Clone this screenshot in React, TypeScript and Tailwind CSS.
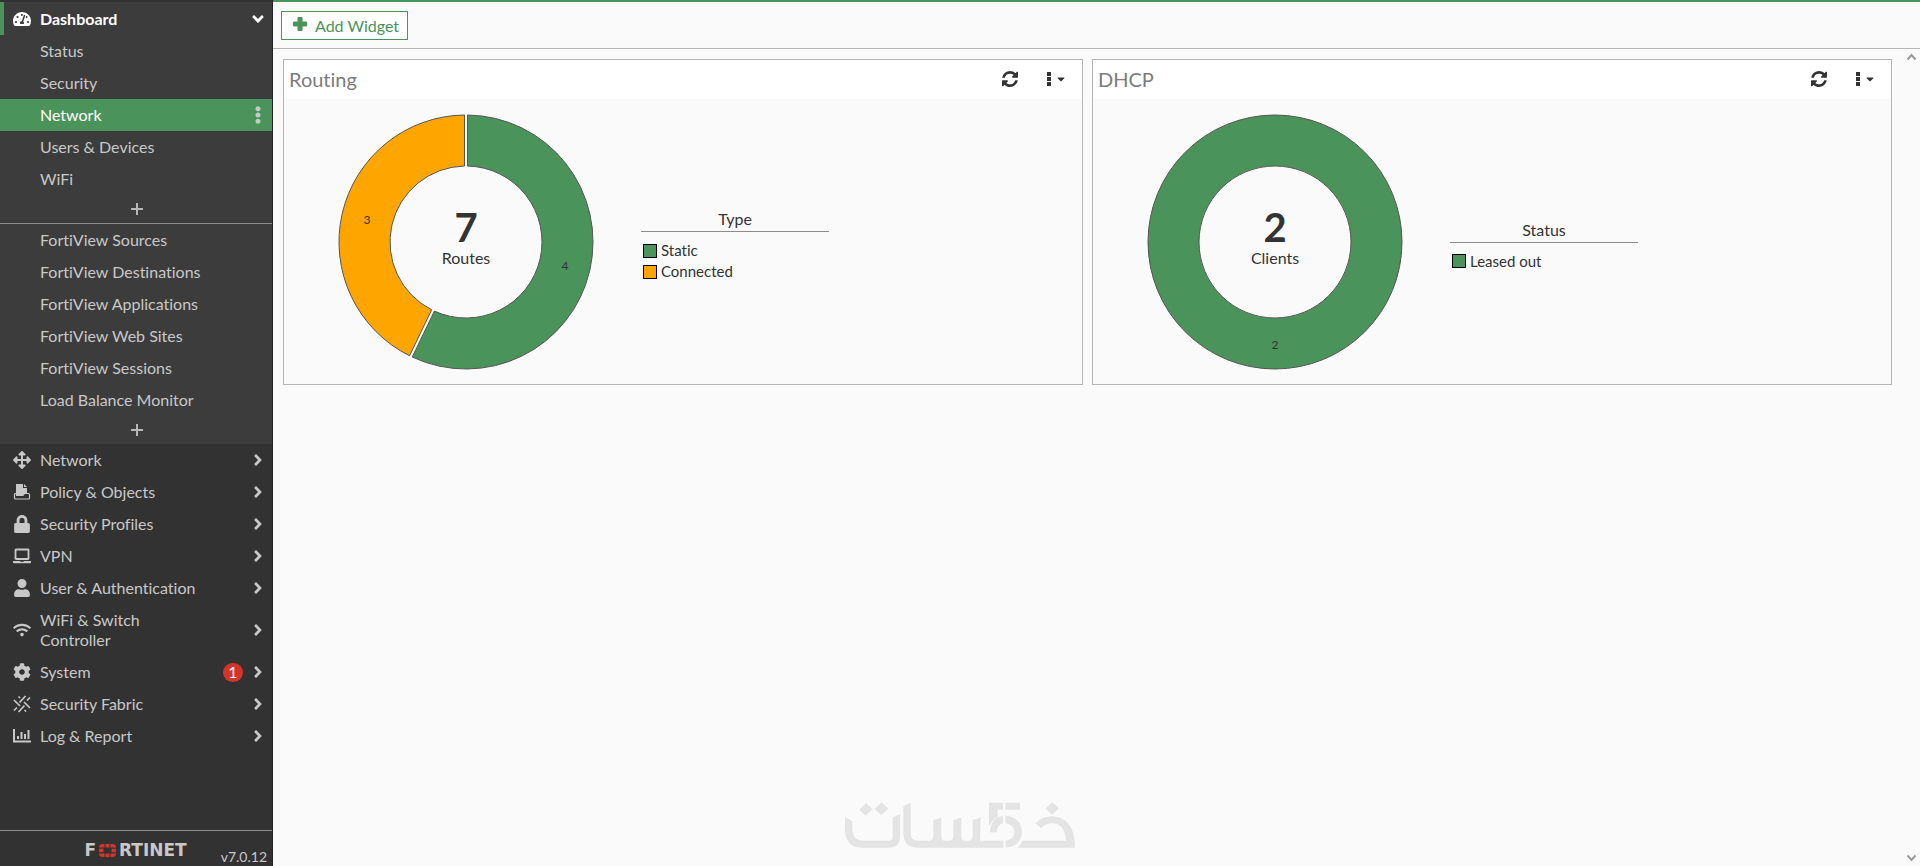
import type { ReactNode } from "react";
import {
  FaAngleDown,
  FaAngleRight,
  FaArrowsAlt,
  FaCaretDown,
  FaCog,
  FaEllipsisV,
  FaLock,
  FaTachometerAlt,
  FaUser,
  FaWifi,
} from "react-icons/fa";

const GREEN = "#4a935a";
const ORANGE = "#ffa500";

function PolicyIcon() {
  return (
    <svg viewBox="0 0 18 18" className="size-[18px]" fill="currentColor" aria-hidden="true">
      <path d="M3 1h7v4h4v5.500l-3 .5-1 1.500H3z" />
      <path d="M11 1l3 3h-3z" />
      <path
        d="M3 10.500H2.500a1 1 0 0 0-1 1V15a1 1 0 0 0 1 1h13a1 1 0 0 0 1-1v-3.500a1 1 0 0 0-1-1h-4l-1.500 2H3"
        fill="none"
        stroke="currentColor"
        strokeWidth="1.200"
      />
    </svg>
  );
}

function LaptopIcon() {
  return (
    <svg viewBox="0 0 18 18" className="size-[18px]" aria-hidden="true">
      <rect x="2.500" y="2.500" width="13" height="9.500" rx="0.500" fill="none" stroke="currentColor" strokeWidth="1.800" />
      <path d="M0 14h7l.5.700h3L11 14h7v1.200a1 1 0 0 1-1 1H1a1 1 0 0 1-1-1z" fill="currentColor" />
    </svg>
  );
}

function FabricIcon() {
  return (
    <svg viewBox="0 0 18 18" className="size-[18px]" fill="none" stroke="currentColor" strokeWidth="1.700" aria-hidden="true">
      <path d="M6.500 7.500l6-6.500M11 7l6 6M11.500 10.500l-6 6.500M1 5l6 6" />
      <path d="M5.500 1.500l1.500 1.500M14 5.500l3-3M1 15.500l3-3M11.500 15l1.500 1.500" />
    </svg>
  );
}

function ReportIcon() {
  return (
    <svg viewBox="0 0 18 18" className="size-[18px]" fill="currentColor" aria-hidden="true">
      <path d="M0 2h2v11.500h16v2H0z" />
      <path d="M4 9h2v3H4zM7.500 5h2v7h-2zM11 7h2v5h-2zM14.500 3h2v9h-2z" />
    </svg>
  );
}

function RefreshIcon() {
  return (
    <svg viewBox="0 0 1536 1536" className="size-4" fill="currentColor" aria-hidden="true">
      <path d="M1511 928q0 5-1 7-64 268-268 434.500T764 1536q-146 0-282.500-55T238 1324l-129 129q-19 19-45 19t-45-19-19-45V960q0-26 19-45t45-19h448q26 0 45 19t19 45-19 45l-137 137q71 66 161 102t187 36q134 0 250-65t186-179q11-17 53-117 8-23 30-23h192q13 0 22.500 9.500t9.500 22.500zm25-800v448q0 26-19 45t-45 19h-448q-26 0-45-19t-19-45 19-45l138-138Q969 256 768 256q-134 0-250 65T332 500q-11 17-53 117-8 23-30 23H50q-13 0-22.500-9.500T18 608v-7q65-268 270-434.500T768 0q146 0 284 55.500T1297 212l130-129q19-19 45-19t45 19 19 45z" />
    </svg>
  );
}

function LogoGrid() {
  return (
    <svg viewBox="0 0 17 13" className="h-[13px] w-[17px]" fill="#d4352a" aria-hidden="true">
      <path d="M3 0h2.500v3.500H0A3.200 3.200 0 0 1 3 0zM6.500 0h4v3.500h-4zM11.500 0H14a3.200 3.200 0 0 1 3 3.500h-5.500zM0 4.700h4.500v3.600H0zM12.500 4.700H17v3.600h-4.500zM0 9.500h5.500V13H3a3.200 3.200 0 0 1-3-3.500zM6.500 9.500h4V13h-4zM11.500 9.500H17a3.200 3.200 0 0 1-3 3.500h-2.500z" />
    </svg>
  );
}

function Watermark() {
  return (
    <svg
      viewBox="75 68 690 136"
      className="pointer-events-none absolute bottom-[18px] left-1/2 h-[46px] w-[230px] -translate-x-1/2"
      fill="#e4e4e4"
      role="img"
      aria-label="Khamsat"
    >
      <path d="M75 113l22 11v26q2 33 33 33h78q10 0 10-12v-58l22-9v66q0 34-32 34h-80q-53-2-53-54z" />
      <path d="M138 70l20 18-21 20-19-18zM185 68l20 19-21 19-20-18z" />
      <path d="M250 80l22-11v92q0 22 20 22h36q12 0 12-13v-48l24-9v58q0 12 10 12h14q12 0 12-13v-48l24-9v58q0 12 10 12h12q12 0 12-13v-48l24-9-2 70h70v21H290q-40-2-40-44z" />
      <path d="M507 69h42v21h-16v22q-18 8-22 24h-4zM556 69h44v21h-44z" />
      <path d="M549 108v23q-16 3-19 27h-20q2-45 39-50zM556 108q48 4 50 49-2 43-50 47v-21q26-3 27-26-1-23-27-26z" />
      <path d="M592 204q11-8 15-21h131q-4-52-41-52-20 0-34 15l-17-15q20-21 51-21 68 5 68 94z" />
      <path d="M697 68l20 18-20 19-21-18z" />
    </svg>
  );
}

interface Slice {
  label: string;
  value: number;
  color: string;
}

const OUTER = 127;
const INNER = 76;
const GAP = 3;

function slicePath(start: number, end: number) {
  const edge = (radius: number, angle: number, side: number) => {
    const shifted = angle + side * Math.asin(GAP / 2 / radius);
    return `${radius * Math.sin(shifted)} ${-radius * Math.cos(shifted)}`;
  };
  const large = end - start > Math.PI ? 1 : 0;
  return [
    `M${edge(OUTER, start, 1)}`,
    `A${OUTER} ${OUTER} 0 ${large} 1 ${edge(OUTER, end, -1)}`,
    `L${edge(INNER, end, -1)}`,
    `A${INNER} ${INNER} 0 ${large} 0 ${edge(INNER, start, 1)}Z`,
  ].join("");
}

function Donut({ slices, caption }: { slices: Slice[]; caption: string }) {
  const total = slices.reduce((sum, slice) => sum + slice.value, 0);
  let angle = 0;
  return (
    <svg viewBox="-128 -128 256 256" className="size-64 shrink-0" role="img" aria-label={`${total} ${caption}`}>
      {slices.map((slice) => {
        const start = angle;
        const end = start + (slice.value / total) * 2 * Math.PI;
        angle = end;
        const middle = (start + end) / 2;
        const reach = (OUTER + INNER) / 2;
        return (
          <g key={slice.label}>
            {slices.length === 1 ? (
              <>
                <circle r={reach} fill="none" stroke={slice.color} strokeWidth={OUTER - INNER} />
                <circle r={OUTER} fill="none" stroke="#555" />
                <circle r={INNER} fill="none" stroke="#555" />
              </>
            ) : (
              <path d={slicePath(start, end)} fill={slice.color} stroke="#555" />
            )}
            <text x={reach * Math.sin(middle)} y={5 - reach * Math.cos(middle)} textAnchor="middle" className="fill-[#333] text-xs">
              {slice.value}
            </text>
          </g>
        );
      })}
      <text y="0" textAnchor="middle" className="fill-[#333] text-[40px] font-bold">
        {total}
      </text>
      <text y="22" textAnchor="middle" className="fill-[#333] text-base">
        {caption}
      </text>
    </svg>
  );
}

function Widget({ title, caption, legend, slices }: { title: string; caption: string; legend: string; slices: Slice[] }) {
  return (
    <section className="border border-[#b5b5b5]">
      <header className="flex h-[39px] items-center bg-white pr-[15px] pb-0.5 pl-[5px]">
        <h2 className="mr-auto text-xl leading-6 text-[#7c7c7c]">{title}</h2>
        <button type="button" aria-label={`Refresh ${title}`} className="mr-[29px]">
          <RefreshIcon />
        </button>
        <button type="button" aria-label={`${title} options`} className="flex items-center gap-1">
          <svg viewBox="0 0 4 14" className="h-3.5 w-1" fill="currentColor" aria-hidden="true">
            <path d="M0 0h4v4H0zM0 5h4v4H0zM0 10h4v4H0z" />
          </svg>
          <FaCaretDown className="size-3" />
        </button>
      </header>
      <div className="flex h-[285px] items-center gap-[47px] pl-[54px]">
        <Donut slices={slices} caption={caption} />
        <div className="w-[188px] pt-2">
          <h3 className="mb-2 border-b border-[#8c8c8c] pb-[3px] text-center leading-[19px]">{legend}</h3>
          <ul className="text-[15px] leading-[21px]">
            {slices.map((slice) => (
              <li key={slice.label} className="flex h-[21px] items-center gap-1 pl-0.5">
                <span className="size-3.5 border border-black" style={{ backgroundColor: slice.color }} />
                {slice.label}
              </li>
            ))}
          </ul>
        </div>
      </div>
    </section>
  );
}

function SubItem({ label, active = false }: { label: string; active?: boolean }) {
  return (
    <li>
      <a
        href="#"
        aria-current={active ? "page" : undefined}
        className={
          active
            ? "flex h-8 items-center bg-[#4a935a] pr-[5px] pl-10 text-white"
            : "flex h-8 items-center pr-[5px] pl-10"
        }
      >
        <span className="mr-auto">{label}</span>
        {active && <FaEllipsisV className="size-[18px] text-[#c8c8c8]" />}
      </a>
    </li>
  );
}

function AddButton({ label }: { label: string }) {
  return (
    <button type="button" aria-label={label} className="flex h-7 w-full items-center justify-center pl-0.5 text-[#b8b8b8]">
      <svg viewBox="0 0 12 12" className="size-3" fill="currentColor" aria-hidden="true">
        <path d="M5 0h2v5h5v2H7v5H5V7H0V5h5z" />
      </svg>
    </button>
  );
}

const menu: { label: string; icon: ReactNode; badge?: number }[] = [
  { label: "Network", icon: <FaArrowsAlt className="size-[18px]" /> },
  { label: "Policy & Objects", icon: <PolicyIcon /> },
  { label: "Security Profiles", icon: <FaLock className="size-[18px]" /> },
  { label: "VPN", icon: <LaptopIcon /> },
  { label: "User & Authentication", icon: <FaUser className="size-[18px]" /> },
  { label: "WiFi & Switch Controller", icon: <FaWifi className="size-[18px]" /> },
  { label: "System", icon: <FaCog className="size-[18px]" />, badge: 1 },
  { label: "Security Fabric", icon: <FabricIcon /> },
  { label: "Log & Report", icon: <ReportIcon /> },
];

function Sidebar() {
  return (
    <nav className="flex w-[273px] shrink-0 flex-col border-r border-[#222] bg-[#323232] pt-0.5 leading-5 text-[#c8c8c8]">
      <div className="bg-[#3c3c3c]">
        <button
          type="button"
          aria-expanded="true"
          className="flex h-[33px] w-full items-center border-l-4 border-[#4a935a] pr-[5px] pl-[9px] font-bold text-white"
        >
          <FaTachometerAlt className="mr-[9px] size-[18px]" />
          Dashboard
          <FaAngleDown className="ml-auto size-[18px]" />
        </button>
        <ul>
          <SubItem label="Status" />
          <SubItem label="Security" />
          <SubItem label="Network" active />
          <SubItem label="Users & Devices" />
          <SubItem label="WiFi" />
        </ul>
        <AddButton label="Add dashboard" />
        <ul className="border-t border-[#8c8c8c]">
          <SubItem label="FortiView Sources" />
          <SubItem label="FortiView Destinations" />
          <SubItem label="FortiView Applications" />
          <SubItem label="FortiView Web Sites" />
          <SubItem label="FortiView Sessions" />
          <SubItem label="Load Balance Monitor" />
        </ul>
        <AddButton label="Add monitor" />
      </div>
      <ul>
        {menu.map((item) => (
          <li key={item.label}>
            <a href="#" className="flex min-h-8 items-center py-1.5 pr-[5px] pl-[13px]">
              <span className="mr-[9px]">{item.icon}</span>
              <span className="mr-auto max-w-40">{item.label}</span>
              {item.badge && (
                <span className="mr-1.5 flex h-[19px] w-5 items-center justify-center rounded-full bg-[#d4352a] text-white">
                  {item.badge}
                </span>
              )}
              <FaAngleRight className="size-[18px]" />
            </a>
          </li>
        ))}
      </ul>
      <footer className="mt-auto flex h-9 items-end justify-end border-t border-[#8c8c8c] pr-[5px]">
        <span className="mr-[34px] flex h-full items-center gap-[3px] pt-1 font-['DejaVu_Sans',sans-serif] text-[17px] leading-none font-bold">
          <span>F</span>
          <LogoGrid />
          <span>RTINET</span>
        </span>
        <span className="text-sm leading-[18px]">v7.0.12</span>
      </footer>
    </nav>
  );
}

export default function App() {
  return (
    <div className="relative flex min-h-screen bg-[#fafafa] font-['Lato',sans-serif] text-base text-[#333] [font-variant-ligatures:none]">
      <Sidebar />
      <div className="flex min-w-0 flex-1 flex-col border-t-2 border-[#4a935a]">
        <div className="flex h-[47px] items-center border-b border-[#b5b5b5] px-2">
          <button
            type="button"
            className="flex h-[29px] items-center gap-2 border border-[#4a935a] bg-white pr-2 pl-[11px] text-[#4a935a]"
          >
            <svg viewBox="0 0 14 14" className="mb-0.5 size-3.5" fill="currentColor" aria-hidden="true">
              <path d="M5.500 0h3q1 0 1 1v3.500H13q1 0 1 1v3q0 1-1 1H9.500V13q0 1-1 1h-3q-1 0-1-1V9.500H1q-1 0-1-1v-3q0-1 1-1h3.500V1q0-1 1-1z" />
            </svg>
            <span className="pt-px">Add Widget</span>
          </button>
        </div>
        <div className="flex flex-1">
          <main className="grid flex-1 grid-cols-2 content-start gap-[9px] py-2.5 pr-[11px] pl-2.5">
            <Widget
              title="Routing"
              caption="Routes"
              legend="Type"
              slices={[
                { label: "Static", value: 4, color: GREEN },
                { label: "Connected", value: 3, color: ORANGE },
              ]}
            />
            <Widget
              title="DHCP"
              caption="Clients"
              legend="Status"
              slices={[{ label: "Leased out", value: 2, color: GREEN }]}
            />
          </main>
          <div className="flex w-[17px] flex-col items-center justify-between py-1 text-[#999]" aria-hidden="true">
            <svg viewBox="0 0 9 8" className="h-2 w-[9px]" fill="none" stroke="currentColor" strokeWidth="2">
              <path d="M.5 6.500l4-4.500 4 4.500" />
            </svg>
            <svg viewBox="0 0 9 8" className="h-2 w-[9px]" fill="none" stroke="currentColor" strokeWidth="2">
              <path d="M.5 1.500l4 4.500 4-4.500" />
            </svg>
          </div>
        </div>
      </div>
      <Watermark />
    </div>
  );
}
